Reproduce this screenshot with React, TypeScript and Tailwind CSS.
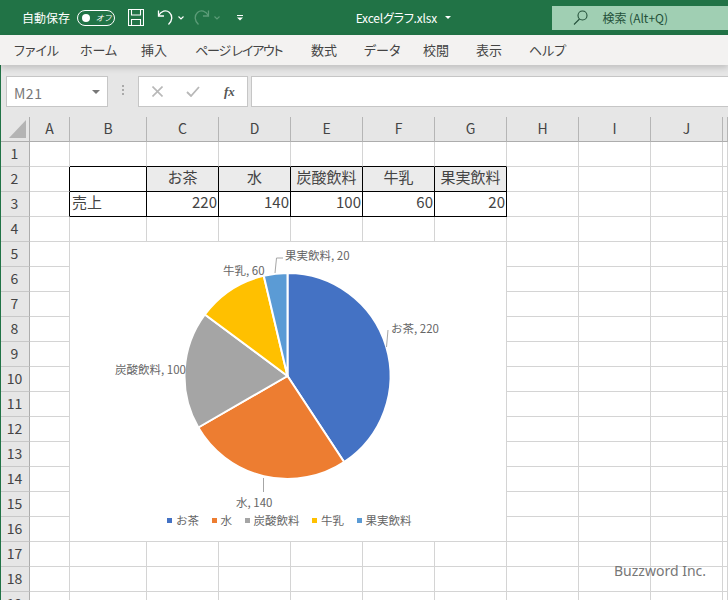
import React from 'react';

const jp = "font-['Noto_Sans_CJK_JP','Noto_Sans',sans-serif]";

const tabs = [
  { label: 'ファイル', w: 'w-[66px]' },
  { label: 'ホーム', w: 'w-[61px]' },
  { label: '挿入', w: 'w-[54px]' },
  { label: 'ページ レイアウト', w: 'w-[116px] tracking-[-1.2px]' },
  { label: '数式', w: 'w-[53px]' },
  { label: 'データ', w: 'w-[59px]' },
  { label: '校閲', w: 'w-[53px]' },
  { label: '表示', w: 'w-[53px]' },
  { label: 'ヘルプ', w: 'w-[53px]' },
];

const columns = ['A', 'B', 'C', 'D', 'E', 'F', 'G', 'H', 'I', 'J', ''];
const gridCols = 'grid-cols-[30px_40px_77px_72px_72px_72px_72px_72px_72px_72px_72px_5px]';

const slices = [
  { name: 'お茶', value: 220, color: '#4472c4', dot: 'bg-[#4472c4]' },
  { name: '水', value: 140, color: '#ed7d31', dot: 'bg-[#ed7d31]' },
  { name: '炭酸飲料', value: 100, color: '#a5a5a5', dot: 'bg-[#a5a5a5]' },
  { name: '牛乳', value: 60, color: '#ffc000', dot: 'bg-[#ffc000]' },
  { name: '果実飲料', value: 20, color: '#5b9bd5', dot: 'bg-[#5b9bd5]' },
];

const cellText: Record<string, string> = {
  'C2': 'お茶',
  'D2': '水',
  'E2': '炭酸飲料',
  'F2': '牛乳',
  'G2': '果実飲料',
  'B3': '売上',
  'C3': '220',
  'D3': '140',
  'E3': '100',
  'F3': '60',
  'G3': '20',
};

const tableCols = ['B', 'C', 'D', 'E', 'F', 'G'];

function cellClass(col: string, row: number) {
  const inTable = tableCols.includes(col) && (row === 2 || row === 3);
  const aboveTable = tableCols.includes(col) && row === 1;
  const leftOfTable = col === 'A' && (row === 2 || row === 3);
  const right = inTable || leftOfTable ? 'border-r-black' : 'border-r-[#d4d4d4]';
  const bottom = inTable || aboveTable ? 'border-b-black' : 'border-b-[#d4d4d4]';
  const fill = row === 2 && inTable && col !== 'B' ? 'bg-[#ebebeb] justify-center' : '';
  const align = row === 3 && col !== 'B' && inTable ? 'justify-end pr-[1px]' : 'pl-[2px]';
  return `${right} ${bottom} ${fill} ${row === 2 ? '' : align}`;
}

function Pie() {
  const cx = 217.5;
  const cy = 134;
  const r = 103;
  const total = slices.reduce((sum, s) => sum + s.value, 0);
  let angle = 0;
  const paths = slices.map((s) => {
    const start = angle;
    angle += (s.value / total) * Math.PI * 2;
    const x1 = cx + r * Math.sin(start);
    const y1 = cy - r * Math.cos(start);
    const x2 = cx + r * Math.sin(angle);
    const y2 = cy - r * Math.cos(angle);
    const large = angle - start > Math.PI ? 1 : 0;
    return (
      <path
        key={s.name}
        d={`M${cx} ${cy}L${x1} ${y1}A${r} ${r} 0 ${large} 1 ${x2} ${y2}Z`}
        fill={s.color}
        stroke="#fff"
        strokeWidth="2"
      />
    );
  });

  return (
    <svg width="436" height="299" className="block">
      {paths}
      <g stroke="#a6a6a6" strokeWidth="1" fill="none">
        <path d="M316.5 105L318 88" />
        <path d="M193.5 236V250" />
        <path d="M205 31L206.500 16H213" />
      </g>
      <g fontSize="11.5" fill="#666" className={jp}>
        <text x="215" y="18">果実飲料, 20</text>
        <text x="153" y="33">牛乳, 60</text>
        <text x="321" y="91">お茶, 220</text>
        <text x="45" y="132">炭酸飲料, 100</text>
        <text x="166" y="265">水, 140</text>
      </g>
    </svg>
  );
}

function SaveIcon() {
  return (
    <svg width="16" height="17" viewBox="0 0 16 17" fill="none" stroke="#fff" strokeWidth="1.1">
      <path d="M.5.5h15v16H.5z" />
      <path d="M3.500.5v5.500h9V.5" />
      <path d="M3.500 16.500v-6h9v6" />
    </svg>
  );
}

function TitleBar() {
  return (
    <div className="flex h-[35px] items-center bg-[#217346] text-white text-[12px] relative">
      <span className={`ml-[22px] w-[55px] ${jp}`}>自動保存</span>
      <div className="flex h-[16px] w-[38px] items-center rounded-full border border-white pl-[4px]">
        <span className="h-[8px] w-[8px] rounded-full bg-white" />
        <span className={`ml-[6px] text-[8px] italic leading-none ${jp}`}>オフ</span>
      </div>
      <div className="ml-[13px] flex items-center">
        <SaveIcon />
      </div>
      <svg className="ml-[13px]" width="17" height="17" viewBox="0 0 17 17" fill="none" stroke="#fff" strokeWidth="1.3">
        <path d="M1.500 1.500V7h5.500" />
        <path d="M1.700 6.500C4 2 9 .5 12.500 3.500c3.300 3 3.200 8-1 12" />
      </svg>
      <svg className="ml-[4px]" width="6" height="4" viewBox="0 0 6 4" fill="none" stroke="#fff" strokeWidth="1.100">
        <path d="M.5.5L3 3 5.500.5" />
      </svg>
      <svg className="ml-[9px]" width="17" height="17" viewBox="0 0 17 17" fill="none" stroke="#5c9c78" strokeWidth="1.300">
        <path d="M15.500 1.500V7H10" />
        <path d="M15.300 6.500C13 2 8 .5 4.500 3.500c-3.300 3-3.200 8 1 12" />
      </svg>
      <svg className="ml-[4px]" width="6" height="4" viewBox="0 0 6 4" fill="none" stroke="#5c9c78" strokeWidth="1.100">
        <path d="M.5.5L3 3 5.500.5" />
      </svg>
      <svg className="ml-[16px]" width="8" height="8" viewBox="0 0 8 8" fill="none" stroke="#fff">
        <path d="M1 1.500h6" />
        <path d="M1 3.500L4 6.500 7 3.500H1z" fill="#fff" stroke="none" />
      </svg>
      <span className={`ml-[112px] w-[90px] text-[12px] tracking-[-0.2px] [font-feature-settings:'palt'] ${jp}`}>Excelグラフ.xlsx</span>
      <span className="border-x-[3px] border-t-[3px] border-x-transparent border-t-white" />
      <div className="ml-[101px] flex h-[24px] w-[176px] items-center bg-[#a0cfb3] text-[#24513a]">
        <svg className="ml-[21px]" width="15" height="15" viewBox="0 0 15 15" fill="none" stroke="#24513a" strokeWidth="1.100">
          <circle cx="9.500" cy="5.500" r="4.500" />
          <path d="M6.500 9L1 14.500" />
        </svg>
        <span className={`ml-[14px] text-[12px] ${jp}`}>検索 (Alt+Q)</span>
      </div>
    </div>
  );
}

function FormulaBar() {
  return (
    <div className="flex h-[52px] items-start bg-[#e6e6e6] pt-[11px]">
      <div className="ml-[6px] flex h-[31px] w-[102px] items-center justify-between border border-[#c6c6c6] bg-white pl-[7px] pr-[7px]">
        <span className={`pt-[3px] text-[14px] text-[#777] tracking-[0.5px] ${jp}`}>M21</span>
        <span className="border-x-[4px] border-t-[4px] border-x-transparent border-t-[#777]" />
      </div>
      <div className="ml-[14px] mt-[9px] flex flex-col gap-[2px]">
        <span className="h-[2px] w-[2px] bg-[#aaa]" />
        <span className="h-[2px] w-[2px] bg-[#aaa]" />
        <span className="h-[2px] w-[2px] bg-[#aaa]" />
      </div>
      <div className="ml-[14px] flex h-[31px] w-[110px] items-center border border-[#c6c6c6] bg-white">
        <svg className="ml-[13px]" width="11" height="11" viewBox="0 0 11 11" stroke="#b8b8b8" strokeWidth="1.600">
          <path d="M.5.5l10 10M10.500.5l-10 10" />
        </svg>
        <svg className="ml-[23px]" width="14" height="11" viewBox="0 0 14 11" fill="none" stroke="#b8b8b8" strokeWidth="1.800">
          <path d="M1 6l4 4 8-9" />
        </svg>
        <span className="ml-[24px] font-['Liberation_Serif',serif] text-[13px] font-bold italic text-[#555]">fx</span>
      </div>
      <div className="ml-[3px] h-[31px] flex-1 border-y border-l border-[#c6c6c6] bg-white" />
    </div>
  );
}

function Sheet() {
  const rows = Array.from({ length: 19 }, (_, i) => i + 1);
  return (
    <div className={`grid ${gridCols} auto-rows-[25px] bg-white`}>
      <div className="relative h-[25px] border-r border-b border-r-[#adadad] border-b-[#adadad] bg-[#e6e6e6]">
        <span className="absolute left-[9px] top-[3px] border-b-[18px] border-l-[17px] border-b-[#b4b4b4] border-l-transparent" />
      </div>
      {columns.map((c, i) => (
        <div
          key={i}
          className={`flex items-center justify-center border-r border-b border-r-[#b5b5b5] border-b-[#adadad] bg-[#e6e6e6] pb-[2px] text-[14px] text-[#444] ${jp}`}
        >
          {c}
        </div>
      ))}
      {rows.map((row) => (
        <React.Fragment key={row}>
          <div className={`flex items-center justify-center border-r border-b border-r-[#adadad] border-b-[#c8c8c8] bg-[#e6e6e6] pb-[2px] text-[14px] text-[#444] ${jp}`}>
            {row}
          </div>
          {columns.map((c, i) => (
            <div
              key={i}
              className={`flex items-center overflow-hidden whitespace-nowrap border-r border-b pb-[3px] text-[15px] text-[#444] ${cellClass(c, row)} ${jp}`}
            >
              {cellText[`${c}${row}`]}
            </div>
          ))}
        </React.Fragment>
      ))}
    </div>
  );
}

export default function App() {
  return (
    <div className="relative h-[600px] w-[728px] overflow-hidden bg-white">
      <TitleBar />
      <div className="relative z-10 flex h-[30px] items-center bg-[#f3f2f1] pl-[14px] text-[13px] text-[#444] shadow-[0_3px_6px_rgba(0,0,0,0.16)]">
        {tabs.map((t) => (
          <span key={t.label} className={`${t.w} shrink-0 whitespace-nowrap [font-feature-settings:'palt'] ${jp}`}>
            {t.label}
          </span>
        ))}
      </div>
      <FormulaBar />
      <Sheet />

      {/* chart object floats over the cells */}
      <div className="absolute left-[70px] top-[242px] h-[299px] w-[436px] bg-white">
        <Pie />
        <div className={`absolute left-[97px] top-[269px] flex items-center text-[11.500px] leading-[18px] text-[#666] ${jp}`}>
          {slices.map((s) => (
            <div key={s.name} className="mr-[12.500px] flex items-center gap-[4px]">
              <span className={`h-[5px] w-[5px] ${s.dot}`} />
              <span>{s.name}</span>
            </div>
          ))}
        </div>
      </div>

      <div className="absolute bottom-0 left-0 top-[35px] w-[1px] bg-[#217346]" />
      <span className="absolute left-[614px] top-[560px] font-['Noto_Sans',sans-serif] text-[14px] text-[#777]">Buzzword Inc.</span>
    </div>
  );
}
